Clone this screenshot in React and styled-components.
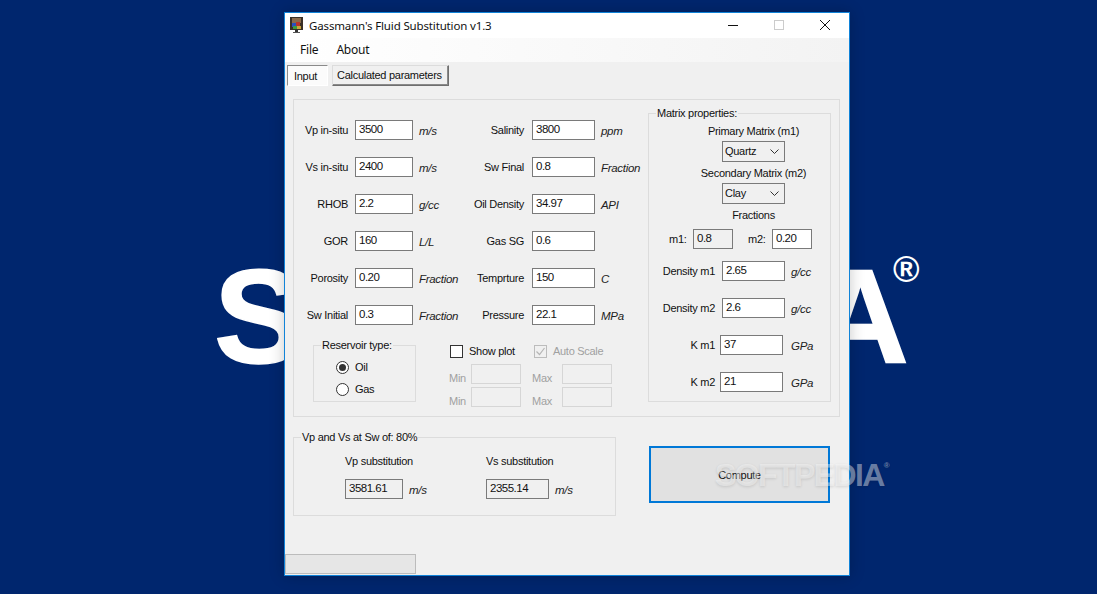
import React from "react";
import styled, { createGlobalStyle } from "styled-components";

const GlobalStyle = createGlobalStyle`
  html, body {
    margin: 0;
    padding: 0;
    height: 100%;
    overflow: hidden;
  }
  body {
    font-family: "Liberation Sans", Arial, sans-serif;
    font-size: 11px;
    letter-spacing: -0.28px;
    color: #111;
  }
`;

const Desktop = styled.div`
  position: relative;
  width: 1097px;
  height: 594px;
  background: #00266e;
  overflow: hidden;
`;

const WallpaperLetter = styled.div`
  position: absolute;
  left: ${(p) => p.$left}px;
  top: 237px;
  font-size: 134px;
  line-height: 160px;
  font-weight: 700;
  letter-spacing: 0;
  color: #fff;
  -webkit-text-stroke: 1.5px #fff;
`;

const WallpaperMark = styled.div`
  position: absolute;
  left: 893px;
  top: 250px;
  font-size: 36px;
  line-height: 40px;
  font-weight: 700;
  letter-spacing: 0;
  color: #fff;
`;

const Watermark = styled.div`
  position: absolute;
  left: 715px;
  top: 458px;
  font-size: 32px;
  line-height: 34px;
  font-weight: 700;
  letter-spacing: -1.6px;
  color: rgba(255, 255, 255, 0.42);
  white-space: nowrap;
  pointer-events: none;
  text-shadow: 0 1px 3px rgba(0, 0, 0, 0.12);
`;

const WatermarkReg = styled.sup`
  font-size: 8px;
  vertical-align: 18px;
  line-height: 0;
  letter-spacing: 0;
`;

const Window = styled.div`
  position: absolute;
  left: 284px;
  top: 12px;
  width: 566px;
  height: 564px;
  box-sizing: border-box;
  border: 1px solid #1083d8;
  background: #f0f0f0;
  display: flex;
  flex-direction: column;
  box-shadow: 0 0 14px rgba(0, 0, 0, 0.22);
`;

const TitleBar = styled.div`
  height: 25px;
  flex: none;
  box-sizing: border-box;
  padding: 0 1px 1px 5px;
  background: #fff;
  display: flex;
  align-items: center;
`;

const AppIcon = styled.svg`
  width: 13px;
  height: 16px;
  margin-right: 6px;
`;

const Title = styled.div`
  font-family: "Noto Sans", sans-serif;
  font-size: 11.5px;
  letter-spacing: -0.15px;
  color: #111;
  white-space: nowrap;
`;

const WindowButtons = styled.div`
  margin-left: auto;
  display: flex;
`;

const WindowButton = styled.div`
  width: 46px;
  height: 24px;
  display: flex;
  align-items: center;
  justify-content: center;
`;

const MenuBar = styled.div`
  height: 24px;
  flex: none;
  box-sizing: border-box;
  padding: 0 0 2px 15px;
  display: flex;
  align-items: center;
  gap: 18px;
  font-family: "Noto Sans", sans-serif;
  font-size: 12px;
  letter-spacing: -0.2px;
  background: linear-gradient(to right, #fff, #f3f3f3);
`;

const Tabs = styled.div`
  display: flex;
  padding: 3px 0 0 2px;
  gap: 4px;
  height: 37px;
  box-sizing: border-box;
  flex: none;
`;

const Tab = styled.div`
  height: 21px;
  box-sizing: border-box;
  line-height: 18px;
  white-space: nowrap;
  border: 1px solid;
  ${(p) =>
    p.$active
      ? `
    width: 41px;
    padding: 1px 0 0 6px;
    background: #fbfbfb;
    border-color: #8a8a8a #fff #fff #8a8a8a;
  `
      : `
    width: 117px;
    padding-left: 4px;
    background: #f0f0f0;
    border-color: #dcdcdc #6f6f6f #6f6f6f #dcdcdc;
    box-shadow: inset -1px -1px 0 #8a8a8a;
  `}
`;

const Panel = styled.div`
  margin-left: 8px;
  width: 547px;
  height: 318px;
  flex: none;
  box-sizing: border-box;
  border: 1px solid #dcdcdc;
  display: flex;
`;

const InputSide = styled.div`
  width: 354px;
  flex: none;
  padding-top: 20px;
  display: flex;
  flex-direction: column;
`;

const FieldRows = styled.div`
  display: flex;
  flex-direction: column;
  gap: 17px;
`;

const FieldRow = styled.div`
  display: flex;
`;

const Field = styled.div`
  display: flex;
  align-items: center;
  height: 20px;
  width: ${(p) => p.$width}px;
  flex: none;
`;

const Label = styled.div`
  width: ${(p) => p.$width}px;
  margin-right: ${(p) => p.$gap}px;
  flex: none;
  text-align: right;
  white-space: nowrap;
`;

const TextBox = styled.div`
  width: ${(p) => p.$width}px;
  height: 20px;
  flex: none;
  box-sizing: border-box;
  border: 1px solid ${(p) => (p.$off ? "#d6d6d6" : "#7a7a7a")};
  background: ${(p) => (p.$readonly || p.$off ? "#f0f0f0" : "#fff")};
  padding-left: 3px;
  font-size: 11.5px;
  letter-spacing: -0.5px;
  line-height: 17px;
`;

const Unit = styled.div`
  margin-left: ${(p) => p.$gap || 6}px;
  padding-top: 2px;
  font-size: 11.5px;
  letter-spacing: -0.3px;
  font-style: italic;
  white-space: nowrap;
  color: #222;
`;

const Group = styled.div`
  position: relative;
  box-sizing: border-box;
  border: 1px solid #dcdcdc;
`;

const Legend = styled.span`
  position: absolute;
  left: 7px;
  top: -7px;
  padding: 0 1px;
  background: #f0f0f0;
  line-height: 13px;
  white-space: nowrap;
`;

const LowerArea = styled.div`
  display: flex;
  margin-top: 20px;
  margin-left: 19px;
`;

const ReservoirGroup = styled(Group)`
  width: 103px;
  height: 57px;
  padding: 14px 0 0 22px;
  display: flex;
  flex-direction: column;
  gap: 8px;
`;

const RadioRow = styled.div`
  display: flex;
  align-items: center;
  height: 14px;
  gap: 6px;
`;

const Radio = styled.span`
  width: 13px;
  height: 13px;
  box-sizing: border-box;
  border: 1px solid #333;
  border-radius: 50%;
  background: #fff;
  display: flex;
  align-items: center;
  justify-content: center;
  &::after {
    content: "";
    width: 7px;
    height: 7px;
    border-radius: 50%;
    background: ${(p) => (p.$checked ? "#333" : "transparent")};
  }
`;

const PlotArea = styled.div`
  margin-left: 27px;
  width: 170px;
  margin-top: -4px;
`;

const PlotChecks = styled.div`
  display: flex;
  align-items: center;
  height: 20px;
  margin: 0 0 1px 7px;
`;

const CheckItem = styled.div`
  display: flex;
  align-items: center;
  gap: 6px;
  width: ${(p) => p.$width}px;
  color: ${(p) => (p.$off ? "#a0a0a0" : "#111")};
`;

const CheckBox = styled.span`
  width: 13px;
  height: 13px;
  box-sizing: border-box;
  border: 1px solid ${(p) => (p.$off ? "#bcbcbc" : "#333")};
  background: ${(p) => (p.$off ? "#f0f0f0" : "#fff")};
  display: flex;
`;

const ScaleRows = styled.div`
  display: flex;
  flex-direction: column;
  gap: 3px;
  margin: 3px 0 0 6px;
`;

const ScaleRow = styled.div`
  display: flex;
  align-items: center;
`;

const ScaleLabel = styled.div`
  width: ${(p) => p.$width}px;
  padding: 8px 0 0 ${(p) => p.$indent || 0}px;
  box-sizing: border-box;
  color: #a0a0a0;
`;

const MatrixGroup = styled(Group)`
  margin-top: 13px;
  width: 183px;
  height: 289px;
  padding-top: 10px;
`;

const MatrixHead = styled.div`
  display: flex;
  flex-direction: column;
  align-items: center;
  padding-left: 28px;
`;

const Caption = styled.div`
  line-height: 14px;
  text-align: center;
  white-space: nowrap;
`;

const Select = styled.div`
  width: 63px;
  height: 21px;
  box-sizing: border-box;
  border: 1px solid #7a7a7a;
  background: #f0f0f0;
  margin: 3px 0 4px;
  padding: 0 0 1px 2px;
  display: flex;
  align-items: center;
  justify-content: space-between;
`;

const Chevron = styled.svg`
  width: 9px;
  height: 5px;
  margin-right: 5px;
`;

const FractionRow = styled.div`
  display: flex;
  align-items: center;
  height: 20px;
  margin-top: 7px;
  padding-left: 20px;
`;

const FractionLabel = styled.div`
  margin: 0 5px 0 ${(p) => p.$left || 0}px;
  width: 19px;
`;

const MatrixFields = styled.div`
  display: flex;
  flex-direction: column;
  gap: 17px;
  margin-top: 12px;
`;

const Footer = styled.div`
  display: flex;
  margin: 20px 0 0 8px;
  flex: none;
`;

const ResultGroup = styled(Group)`
  width: 323px;
  height: 79px;
  display: flex;
  padding: 16px 0 0 51px;
`;

const ResultColumn = styled.div`
  width: 141px;
  flex: none;
`;

const ResultCaption = styled.div`
  line-height: 14px;
  margin-bottom: 11px;
`;

const ResultValue = styled.div`
  display: flex;
  align-items: center;
`;

const ComputeButton = styled.div`
  margin: 9px 0 0 33px;
  width: 181px;
  height: 57px;
  box-sizing: border-box;
  border: 2px solid #0078d7;
  background: #e1e1e1;
  display: flex;
  align-items: center;
  justify-content: center;
`;

const ProgressBar = styled.div`
  margin: auto 0 1px;
  width: 131px;
  height: 20px;
  flex: none;
  box-sizing: border-box;
  border: 1px solid #bcbcbc;
  background: #e6e6e6;
`;

const leftFields = [
  ["Vp in-situ", "3500", "m/s", "Salinity", "3800", "ppm"],
  ["Vs in-situ", "2400", "m/s", "Sw Final", "0.8", "Fraction"],
  ["RHOB", "2.2", "g/cc", "Oil Density", "34.97", "API"],
  ["GOR", "160", "L/L", "Gas SG", "0.6", ""],
  ["Porosity", "0.20", "Fraction", "Temprture", "150", "C"],
  ["Sw Initial", "0.3", "Fraction", "Pressure", "22.1", "MPa"],
];

const matrixFields = [
  { label: "Density m1", value: "2.65", unit: "g/cc", labelGap: 7, unitGap: 6 },
  { label: "Density m2", value: "2.6", unit: "g/cc", labelGap: 7, unitGap: 6 },
  { label: "K m1", value: "37", unit: "GPa", labelGap: 5, unitGap: 8 },
  { label: "K m2", value: "21", unit: "GPa", labelGap: 5, unitGap: 8 },
];

function ComboBox({ value }) {
  return (
    <Select>
      {value}
      <Chevron viewBox="0 0 9 5">
        <path d="M0.5 0.5 L4.5 4.5 L8.5 0.5" fill="none" stroke="#333" />
      </Chevron>
    </Select>
  );
}

function App() {
  return (
    <Desktop>
      <GlobalStyle />
      <WallpaperLetter $left={214}>S</WallpaperLetter>
      <WallpaperLetter $left={812}>A</WallpaperLetter>
      <WallpaperMark>®</WallpaperMark>
      <Window>
        <TitleBar>
          <AppIcon viewBox="0 0 13 16">
            <rect width="13" height="13" fill="#3a3026" />
            <rect x="2" y="1" width="9" height="5" fill="#8a6a4a" />
            <rect x="2" y="6" width="4" height="4" fill="#2a4fc0" />
            <rect x="6" y="5" width="4" height="4" fill="#b8342a" />
            <rect x="3" y="9" width="4" height="3" fill="#3f9a3f" />
            <rect x="7" y="9" width="4" height="3" fill="#c9a53a" />
            <rect x="5" y="13" width="3" height="2" fill="#333" />
            <rect x="3" y="15" width="7" height="1" fill="#555" />
          </AppIcon>
          <Title>Gassmann's Fluid Substitution v1.3</Title>
          <WindowButtons>
            <WindowButton>
              <svg width="10" height="10" viewBox="0 0 10 10">
                <path d="M0 5.5 H10" stroke="#111" />
              </svg>
            </WindowButton>
            <WindowButton>
              <svg width="10" height="10" viewBox="0 0 10 10">
                <rect x="0.5" y="0.5" width="9" height="9" fill="none" stroke="#ccc" />
              </svg>
            </WindowButton>
            <WindowButton>
              <svg width="10" height="10" viewBox="0 0 10 10">
                <path d="M0 0 L10 10 M10 0 L0 10" stroke="#111" />
              </svg>
            </WindowButton>
          </WindowButtons>
        </TitleBar>
        <MenuBar>
          <span>File</span>
          <span>About</span>
        </MenuBar>
        <Tabs>
          <Tab $active>Input</Tab>
          <Tab>Calculated parameters</Tab>
        </Tabs>
        <Panel>
          <InputSide>
            <FieldRows>
              {leftFields.map((r) => (
                <FieldRow key={r[0]}>
                  <Field $width={176}>
                    <Label $width={54} $gap={7}>{r[0]}</Label>
                    <TextBox $width={58}>{r[1]}</TextBox>
                    <Unit>{r[2]}</Unit>
                  </Field>
                  <Field $width={178}>
                    <Label $width={54} $gap={8}>{r[3]}</Label>
                    <TextBox $width={63}>{r[4]}</TextBox>
                    <Unit>{r[5]}</Unit>
                  </Field>
                </FieldRow>
              ))}
            </FieldRows>
            <LowerArea>
              <ReservoirGroup>
                <Legend>Reservoir type:</Legend>
                <RadioRow><Radio $checked />Oil</RadioRow>
                <RadioRow><Radio />Gas</RadioRow>
              </ReservoirGroup>
              <PlotArea>
                <PlotChecks>
                  <CheckItem $width={85}><CheckBox />Show plot</CheckItem>
                  <CheckItem $width={80} $off>
                    <CheckBox $off>
                      <svg width="11" height="11" viewBox="0 0 11 11">
                        <path d="M1.5 5.5 L4.5 8.5 L9.5 2" fill="none" stroke="#b5b5b5" strokeWidth="1.2" />
                      </svg>
                    </CheckBox>
                    Auto Scale
                  </CheckItem>
                </PlotChecks>
                <ScaleRows>
                  {[0, 1].map((i) => (
                    <ScaleRow key={i}>
                      <ScaleLabel $width={22}>Min</ScaleLabel>
                      <TextBox $width={50} $off />
                      <ScaleLabel $width={41} $indent={11}>Max</ScaleLabel>
                      <TextBox $width={50} $off />
                    </ScaleRow>
                  ))}
                </ScaleRows>
              </PlotArea>
            </LowerArea>
          </InputSide>
          <MatrixGroup>
            <Legend>Matrix properties:</Legend>
            <MatrixHead>
              <Caption>Primary Matrix (m1)</Caption>
              <ComboBox value="Quartz" />
              <Caption>Secondary Matrix (m2)</Caption>
              <ComboBox value="Clay" />
              <Caption>Fractions</Caption>
            </MatrixHead>
            <FractionRow>
              <FractionLabel>m1:</FractionLabel>
              <TextBox $width={40} $readonly>0.8</TextBox>
              <FractionLabel $left={15}>m2:</FractionLabel>
              <TextBox $width={40}>0.20</TextBox>
            </FractionRow>
            <MatrixFields>
              {matrixFields.map((f) => (
                <Field key={f.label} $width={181}>
                  <Label $width={66} $gap={f.labelGap}>{f.label}</Label>
                  <TextBox $width={63}>{f.value}</TextBox>
                  <Unit $gap={f.unitGap}>{f.unit}</Unit>
                </Field>
              ))}
            </MatrixFields>
          </MatrixGroup>
        </Panel>
        <Footer>
          <ResultGroup>
            <Legend>Vp and Vs at Sw of: 80%</Legend>
            <ResultColumn>
              <ResultCaption>Vp substitution</ResultCaption>
              <ResultValue>
                <TextBox $width={58} $readonly>3581.61</TextBox>
                <Unit>m/s</Unit>
              </ResultValue>
            </ResultColumn>
            <ResultColumn>
              <ResultCaption>Vs substitution</ResultCaption>
              <ResultValue>
                <TextBox $width={63} $readonly>2355.14</TextBox>
                <Unit>m/s</Unit>
              </ResultValue>
            </ResultColumn>
          </ResultGroup>
          <ComputeButton>Compute</ComputeButton>
        </Footer>
        <ProgressBar />
      </Window>
      <Watermark>
        SOFTPEDIA
        <WatermarkReg>®</WatermarkReg>
      </Watermark>
    </Desktop>
  );
}

export default App;
